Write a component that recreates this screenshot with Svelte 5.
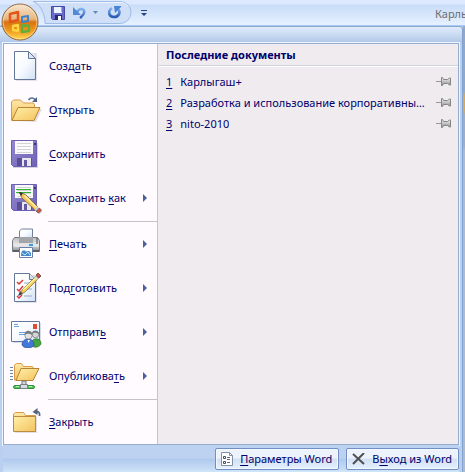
<script>
    const commands = [
        { icon: 'new', pre: 'Созд', key: 'а', post: 'ть' },
        { icon: 'open', pre: '', key: 'О', post: 'ткрыть' },
        { icon: 'save', pre: '', key: 'С', post: 'охранить' },
        { icon: 'saveas', pre: 'Сохранить ', key: 'к', post: 'ак', more: true, split: true },
        { icon: 'print', pre: '', key: 'П', post: 'ечать', more: true },
        { icon: 'prepare', pre: 'Под', key: 'г', post: 'отовить', more: true },
        { icon: 'send', pre: 'Отправит', key: 'ь', post: '', more: true },
        { icon: 'publish', pre: 'Опубликова', key: 'т', post: 'ь', more: true, split: true },
        { icon: 'close', pre: '', key: 'З', post: 'акрыть' }
    ]

    const documents = [
        'Карлыгаш+',
        'Разработка и использование корпоративных сетей',
        'nito-2010'
    ]
</script>

{#snippet floppy()}
    <path d="M1.5 2.500h25v26h-23l-2-2z" fill="url(#purple)" stroke="#6b60b4" />
    <path d="M5 3h18v13H5z" fill="#fafafa" />
    <path d="M7 5.500h14M7 8.500h14M7 11.500h14M7 14.500h14" stroke="#d4d4d8" />
    <path d="M7 20h15v8H7z" fill="#5b4e98" />
    <path d="M12 20h9v8h-9z" fill="#e6e6ee" />
    <path d="M14 22h3v6h-3z" fill="#6658a4" />
    <path d="M24 5h2v2h-2z" fill="#3d3280" />
{/snippet}

{#snippet icon(name)}
    <svg class="icon" viewBox="0 0 32 32" aria-hidden="true">
        {#if name === 'new'}
            <path d="M6 3h21v28H6z" fill="#e3e2ea" />
            <path d="M4.500 1.500h14l7 7v21h-21z" fill="url(#paper)" stroke="#647796" />
            <path d="M18.500 1.500v7h7z" fill="#dce8f7" stroke="#647796" />
        {:else if name === 'open'}
            <path d="M3 27l6-12h23l-6 13z" fill="#e2dfe4" />
            <path d="M1.500 26V8l2-2h7l3 3h10l1 2v7l-5 8z" fill="url(#folderback)" stroke="#d79b49" />
            <path d="M2 26.500l6-13h22l-6 13z" fill="url(#folder)" stroke="#b98335" />
            <path d="M18.500 6c2-3 6-2.500 7 1" fill="none" stroke="#5b7192" stroke-width="1.500" />
            <path d="M22 8h5V3z" fill="#4f6484" />
        {:else if name === 'save'}
            <path d="M3 5h25v25H3z" fill="#d5d3dd" />
            {@render floppy()}
        {:else if name === 'saveas'}
            {@render floppy()}
            <path d="M6 7.500h15M6 10.500h15" stroke="#2fb62f" />
            <path d="M12 14l17 18 3-2-16-17z" fill="#504560" opacity=".3" />
            <path d="M9.500 10.500l6 2L28 25l-3 3-13-12z" fill="#f6c659" stroke="#7d6238" stroke-width=".8" />
            <path d="M14.500 13.500l12 12" stroke="#fff0a9" stroke-width="1.500" />
            <path d="M9 10l4 1-2 3z" fill="#333" />
            <path d="M26 29l3-3 2.500 2-3 3z" fill="#c95750" stroke="#875152" />
            <path d="M24.500 27.500l3-3 1.500 1.500-3 3z" fill="#c8d0d4" />
        {:else if name === 'print'}
            <path d="M9.500 10V3l2-2h11v9z" fill="url(#paper)" stroke="#73829b" />
            <path d="M2.500 12.500l2-3h23l2 3v11h-27z" fill="url(#printer)" stroke="#777b80" />
            <path d="M9 9h14v6H9z" fill="#a2a6aa" />
            <path d="M4 18h25" stroke="#f5f5f5" />
            <path d="M3 23h26" stroke="#5c6066" stroke-width="2" />
            <path d="M9.500 19.500h13v10h-13z" fill="#fff" stroke="#6781aa" />
            <path d="M11 27c1-7 3-3 4-5 1 4 3-2 6 3v3H11z" fill="#4489cb" />
            <path d="M12 25l3 2 3-3 2 3" fill="none" stroke="#c3e5fb" />
            <path d="M19 17h4" stroke="#399ce8" stroke-width="2" />
            <path d="M26 11h2M26 13h2M26 15h2" stroke="#444a50" />
        {:else if name === 'prepare'}
            <path d="M6 3h21v28H6z" fill="#e3e2ea" />
            <path d="M4.500 1.500h15l6 6v22h-21z" fill="url(#paper)" stroke="#647796" />
            <path d="M19.500 1.500v6h6" fill="#d7e2f1" stroke="#647796" />
            <path d="M14 11h6M14 17h8M14 24h8" stroke="#9cacc3" />
            <path d="M7 10l2 2 4-4M7 17l2 2 4-5M7 24l2 2 3-3" fill="none" stroke="#db3a3c" stroke-width="1.500" />
            <path d="M10 22l2-4L26 4l2.500 2.500-14 14z" fill="#f4cc50" stroke="#75684a" stroke-width=".7" />
            <path d="M13 18L27 5" stroke="#fff3a5" stroke-width="1.300" />
            <path d="M8 24l2-5 3 3z" fill="#454343" />
            <path d="M26 3l2-2 3 3-2 2z" fill="#c7504c" stroke="#8c5353" />
            <path d="M24 5l1-1 3 3-1 1z" fill="#cad7dc" />
        {:else if name === 'send'}
            <path d="M3 7h28v20H3z" fill="#d8dbe3" />
            <path d="M1.500 5.500h28v20h-28z" fill="url(#paper)" stroke="#6379a2" />
            <path d="M4 8.500h4M4 10.500h5M9 16.500h8M9 18.500h7" stroke="#6ca3df" />
            <path d="M23 8h4v5h-4z" fill="#df4b2c" />
            <path d="M21 29c0-8 10-8 10-1-2 4-8 4-10 1z" fill="#43a641" stroke="#28732b" stroke-width=".7" />
            <circle cx="25.500" cy="18.500" r="3.300" fill="#d2d4d5" stroke="#777" stroke-width=".7" />
            <path d="M22 18c0-5 7-4 7 0-3-1-4-2-7 0z" fill="#777a7e" />
            <path d="M12 29c0-8 12-8 12 0-2 4-10 4-12 0z" fill="#4278d7" stroke="#274b9c" stroke-width=".7" />
            <circle cx="18.500" cy="19.500" r="3.600" fill="#e1e2e3" stroke="#777" stroke-width=".7" />
            <path d="M14.500 19c0-6 8-5 8 0-3-1-5-2-8 0z" fill="#777a7e" />
            <path d="M17.500 24l1 3 1.500-3" fill="#fff" />
        {:else if name === 'publish'}
            <path d="M0 7.500h3M0 10.500h3M0 13.500h3M0 16.500h3M0 19.500h3" stroke="#6989b4" />
            <path d="M4.500 20V5l2-1.500h5l2 3h9l1 2v8l-4 4z" fill="url(#folderback)" stroke="#d79b49" />
            <path d="M6 20.500l5-12h18l-6 12z" fill="url(#folder)" stroke="#b98335" />
            <path d="M12 21h4v5h-4z" fill="#d3d7dc" stroke="#737980" />
            <path d="M5 25.500h18a1 1 0 0 1 0 3H5a1 1 0 0 1 0-3z" fill="#56c45c" stroke="#328d40" />
            <path d="M10.500 24.500h7v4h-7z" fill="#d9dde1" stroke="#777d84" />
            <path d="M6 26.500h3M19 26.500h3" stroke="#b5f0af" />
        {:else if name === 'close'}
            <path d="M5 10h22v17H5z" fill="#e3dfe3" />
            <path d="M3.500 25V8l2-1.500h8l2 3h10v16z" fill="url(#folderback)" stroke="#d79b49" />
            <path d="M3.500 10.500h22v15h-22z" fill="url(#folder)" stroke="#bd8b41" />
            <path d="M25 6c4-1 5 1 4.500 4" fill="none" stroke="#55647e" stroke-width="1.800" />
            <path d="M22.500 6l5-4v7z" fill="#55647e" />
        {/if}
    </svg>
{/snippet}

<div class="window">
    <svg class="defs" aria-hidden="true">
        <defs>
            <linearGradient id="paper" x1="0" y1="0" x2="1" y2="1">
                <stop offset="0" stop-color="#fff" /><stop offset=".5" stop-color="#f8fbff" /><stop offset="1" stop-color="#cfe0f5" />
            </linearGradient>
            <linearGradient id="folder" x1="0" y1="0" x2="1" y2="1">
                <stop offset="0" stop-color="#fff0aa" /><stop offset="1" stop-color="#f3c25c" />
            </linearGradient>
            <linearGradient id="folderback" x1="0" y1="0" x2="0" y2="1">
                <stop offset="0" stop-color="#ffe9aa" /><stop offset="1" stop-color="#f4bd55" />
            </linearGradient>
            <linearGradient id="purple" x1="0" y1="0" x2="1" y2="1">
                <stop offset="0" stop-color="#9389d2" /><stop offset="1" stop-color="#6f62b4" />
            </linearGradient>
            <linearGradient id="printer" x1="0" y1="0" x2="0" y2="1">
                <stop offset="0" stop-color="#babdc0" /><stop offset=".5" stop-color="#e6e6e7" /><stop offset="1" stop-color="#858a8f" />
            </linearGradient>
            <linearGradient id="blue" x1="0" y1="0" x2="0" y2="1">
                <stop offset="0" stop-color="#83b1ee" /><stop offset="1" stop-color="#2859b4" />
            </linearGradient>
            <linearGradient id="pin" x1="0" y1="0" x2="0" y2="1">
                <stop offset="0" stop-color="#f5f5f5" /><stop offset="1" stop-color="#8d8d8d" />
            </linearGradient>
            <linearGradient id="orb" x1="0" y1="0" x2="0" y2="1">
                <stop offset="0" stop-color="#f7e7d5" /><stop offset=".42" stop-color="#e8b67c" /><stop offset=".5" stop-color="#d8740f" /><stop offset=".75" stop-color="#f09a1c" /><stop offset="1" stop-color="#ffdc55" />
            </linearGradient>
        </defs>
    </svg>

    <header class="titlebar">
        <div class="quick">
            <svg class="quick-shape" viewBox="0 0 102 24" aria-hidden="true">
                <path d="M1 1.500h87a11 11 0 0 1 0 22H13C13 13 8 4 1 1.500z" fill="#cfdff7" stroke="#9fbce6" />
                <path d="M5 2.500h83a10 10 0 0 1 8 4" fill="none" stroke="#eef5ff" />
            </svg>
            <button aria-label="Сохранить">
                <svg width="14" height="14" viewBox="0 0 14 14">
                    <path d="M.5.500h13v13h-12l-1-1z" fill="#6a6acb" stroke="#4848ab" />
                    <path d="M3 1h8v6H3z" fill="#edf3ff" />
                    <path d="M10 1h1v5h-1z" fill="#9ba9de" />
                    <path d="M4 9h7v5H4z" fill="#272c68" />
                    <path d="M7 10h3v4H7z" fill="#fff" />
                </svg>
            </button>
            <button aria-label="Отменить">
                <svg width="13" height="13" viewBox="0 0 13 13">
                    <path d="M4 6c3-5 8-3 7 1-.5 2-2 3-4 5" fill="none" stroke="url(#blue)" stroke-width="2.500" />
                    <path d="M0 1v8h8z" fill="#5388d9" />
                </svg>
            </button>
            <button class="drop" aria-label="Список отмены">
                <svg width="5" height="3" viewBox="0 0 5 3"><path d="M0 0h5L2.500 3z" fill="#6288bd" /></svg>
            </button>
            <button aria-label="Повторить">
                <svg width="13" height="13" viewBox="0 0 13 13">
                    <path d="M4 2C-1 5 1 11 6 11s7-5 4-8" fill="none" stroke="url(#blue)" stroke-width="2.600" />
                    <path d="M6 0h7v1L7 7z" fill="#4b82d4" />
                </svg>
            </button>
            <button class="customize" aria-label="Настройка панели быстрого доступа">
                <svg width="6" height="6" viewBox="0 0 6 6"><path d="M0 0h6v1H0zM0 3h6L3 6z" fill="#294587" /></svg>
            </button>
        </div>
        <span class="title">Карлыгаш+</span>
    </header>

    <button class="office" aria-label="Кнопка Office">
        <svg viewBox="0 0 38 38">
            <circle cx="19" cy="19" r="18" fill="url(#orb)" stroke="#8c6742" />
            <circle cx="19" cy="19" r="16.800" fill="none" stroke="#ffe5b5" opacity=".6" />
            <g fill="none" stroke-linejoin="round">
                <path d="M9 11l8-2v8l-8 2z" stroke="#e4571b" stroke-width="2.600" />
                <path d="M21 14l6-1v5l-6 1z" stroke="#3d83cb" stroke-width="2" />
                <path d="M12 23l5-1v6l-5-1z" stroke="#ffd444" stroke-width="2.300" />
                <path d="M21 22l7 1v5l-7 1z" stroke="#5fae3e" stroke-width="2.300" />
            </g>
        </svg>
    </button>

    <main class="workspace">
        <section class="menu">
            <div class="panes">
                <nav class="commands">
                    {#each commands as item}
                        <button class="command" class:split={item.split}>
                            {@render icon(item.icon)}
                            <span class="label">{item.pre}<u>{item.key}</u>{item.post}</span>
                            {#if item.more}
                                <svg class="arrow" viewBox="0 0 4 8" aria-hidden="true"><path d="M0 0l4 4-4 4z" /></svg>
                            {/if}
                        </button>
                    {/each}
                </nav>
                <div class="recent">
                    <h2>Последние документы</h2>
                    <ul>
                        {#each documents as name, i}
                            <li>
                                <a href="#doc{i + 1}"><u>{i + 1}</u><span>{name}</span></a>
                                <button class="pin" aria-label="Закрепить {name}">
                                    <svg width="16" height="9" viewBox="0 0 16 9">
                                        <path d="M0 4.500h5" stroke="#999" />
                                        <path d="M5.500.500h1l1 2h4l2-1.500h1v7h-1l-2-1.500h-4l-1 2h-1z" fill="url(#pin)" stroke="#858585" />
                                    </svg>
                                </button>
                            </li>
                        {/each}
                    </ul>
                </div>
            </div>
            <footer>
                <button class="action">
                    <svg width="12" height="14" viewBox="0 0 12 14" aria-hidden="true">
                        <path d="M.5.500h8l3 3v10H.5z" fill="#fff" stroke="#8390a5" />
                        <path d="M8.500.500v3h3" fill="none" stroke="#8390a5" />
                        <path d="M2.500 4.500h2v2h-2zM2.500 9.500h2v2h-2z" fill="none" stroke="#454e62" />
                        <path d="M6 5.500h3M6 7.500h3M6 10.500h3" stroke="#606b80" />
                    </svg>
                    <span><u>П</u>араметры Word</span>
                </button>
                <button class="action">
                    <svg width="13" height="12" viewBox="0 0 13 12" aria-hidden="true">
                        <path d="M1 1l11 10M12 0L1 11" fill="none" stroke="#505050" stroke-width="2" />
                    </svg>
                    <span>В<u>ы</u>ход из Word</span>
                </button>
            </footer>
        </section>
        <div class="page-edge"></div>
    </main>
</div>

<style>
    :global(body) {
        background: #b8cef0;
    }
    .window {
        position: relative;
        overflow: hidden;
        color: #00006b;
        font-family: "Noto Sans", "Open Sans", sans-serif;
        font-size: 11px;
        line-height: 16px;
    }
    .defs {
        position: absolute;
        width: 0;
        height: 0;
    }
    button {
        padding: 0;
        border: 0;
        background: none;
        color: inherit;
        font: inherit;
    }
    svg {
        display: block;
        flex: none;
    }
    u {
        text-decoration-thickness: 1px;
        text-underline-offset: 2px;
    }
    .titlebar {
        display: flex;
        align-items: center;
        justify-content: space-between;
        height: 25px;
        overflow: hidden;
        background: linear-gradient(#dce9ff 0 4px, #cadcf8 5px, #d5e5fb 14px, #e5f0ff 24px);
    }
    .quick {
        position: relative;
        display: flex;
        align-items: center;
        gap: 8px;
        height: 25px;
        padding-left: 51px;
    }
    .quick-shape {
        position: absolute;
        left: 32px;
        top: 0;
        width: 102px;
        height: 24px;
    }
    .quick button {
        position: relative;
    }
    .drop {
        margin: 0 2px 0 -1px;
    }
    .customize {
        margin-left: 12px;
    }
    .title {
        width: 30px;
        overflow: hidden;
        padding-top: 3px;
        color: #696d76;
        white-space: nowrap;
    }
    .office {
        position: absolute;
        left: 1px;
        top: 3px;
        z-index: 1;
        width: 38px;
        height: 38px;
    }
    .workspace {
        display: flex;
        border-top: 1px solid #a9c8f5;
    }
    .menu {
        flex: 1;
        min-width: 0;
        padding: 16px 3px 0;
        border-top: 1px solid #8ea8cc;
        border-right: 1px solid #84a2cc;
        border-radius: 0 4px 0 0;
        background: linear-gradient(#e0ebfa 0, #cbdcf3 7px, #b3c9e8 15px, #bad0f0 18px);
    }
    .page-edge {
        width: 2px;
        background: linear-gradient(#8fa9cc 0 65px, #d9a850 70px 84px, #9caec9 90px 120px, #aabbd2 125px);
    }
    .panes {
        display: flex;
        border: 1px solid #94add0;
        background: #efebef;
        box-shadow: 0 0 0 1px #eef5ff;
    }
    .commands {
        width: 153px;
        border-right: 1px solid #c5c5c9;
        background: #fffbff;
    }
    .command {
        display: flex;
        align-items: center;
        gap: 7px;
        width: 100%;
        height: 44px;
        padding: 0 10px 0 6px;
        text-align: left;
    }
    .split {
        height: 46px;
        padding-bottom: 1px;
        border-bottom: 1px solid;
        border-image: linear-gradient(90deg, transparent 44px, #c5c5c9 44px) 1;
    }
    .icon {
        width: 32px;
        height: 32px;
    }
    .label {
        flex: 1;
        white-space: nowrap;
    }
    .arrow {
        width: 4px;
        height: 8px;
        fill: #4b5f9c;
    }
    .recent {
        flex: 1;
        min-width: 0;
        padding-left: 1px;
    }
    h2 {
        margin: 0;
        padding: 3px 7px 2px;
        border-bottom: 1px solid #d2d4dc;
        box-shadow: 0 1px #fff;
        font-size: 11px;
        font-weight: bold;
        line-height: 16px;
    }
    ul {
        margin: 0;
        padding: 5px 6px 0 7px;
        list-style: none;
    }
    li {
        display: flex;
        align-items: center;
        gap: 6px;
        height: 21px;
    }
    a {
        display: flex;
        flex: 1;
        gap: 8px;
        min-width: 0;
        color: inherit;
        text-decoration: none;
    }
    a span {
        overflow: hidden;
        text-overflow: ellipsis;
        white-space: nowrap;
    }
    footer {
        display: flex;
        justify-content: flex-end;
        gap: 7px;
        padding: 3px 0 2px;
        background: linear-gradient(#bdd2f1 0 13px, #b0caed 14px, #c7dcf5 24px, #cfe6fa);
    }
    .action {
        display: flex;
        align-items: center;
        gap: 7px;
        height: 22px;
        padding: 0 6px 0 5px;
        border: 1px solid #728fc4;
        border-radius: 2px;
        background: linear-gradient(#edf3fc 0 9px, #d2e0f4 10px, #e6f1fd);
        box-shadow: inset 0 0 0 1px #f3f8ff;
        white-space: nowrap;
    }
</style>
